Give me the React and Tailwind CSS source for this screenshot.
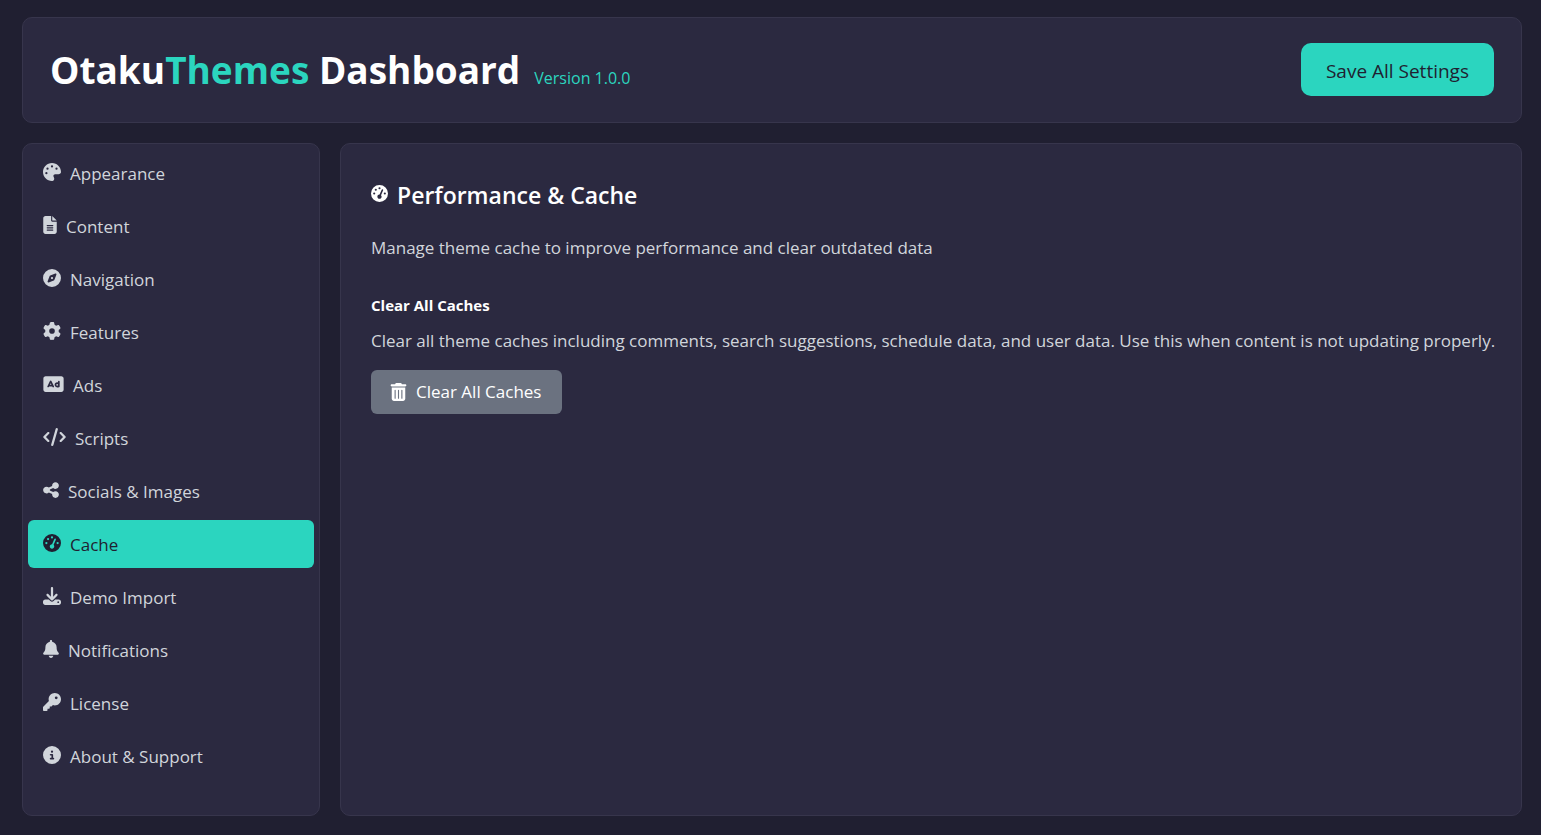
import { useState } from 'react';
import {
  FaBell,
  FaCircleInfo,
  FaCode,
  FaCompass,
  FaDownload,
  FaFileLines,
  FaGaugeHigh,
  FaGear,
  FaKey,
  FaPalette,
  FaRectangleAd,
  FaShareNodes,
  FaTrashCan,
} from 'react-icons/fa6';

const tabs = [
  { id: 'appearance', label: 'Appearance', icon: FaPalette, width: 'w-[18px]' },
  { id: 'content', label: 'Content', icon: FaFileLines, width: 'w-[14px]' },
  { id: 'navigation', label: 'Navigation', icon: FaCompass, width: 'w-[18px]' },
  { id: 'features', label: 'Features', icon: FaGear, width: 'w-[18px]' },
  { id: 'ads', label: 'Ads', icon: FaRectangleAd, width: 'w-[21px]' },
  { id: 'scripts', label: 'Scripts', icon: FaCode, width: 'w-[23px]' },
  { id: 'socials', label: 'Socials & Images', icon: FaShareNodes, width: 'w-[16px]' },
  { id: 'cache', label: 'Cache', icon: FaGaugeHigh, width: 'w-[18px]' },
  { id: 'demo', label: 'Demo Import', icon: FaDownload, width: 'w-[18px]' },
  { id: 'notifications', label: 'Notifications', icon: FaBell, width: 'w-[16px]' },
  { id: 'license', label: 'License', icon: FaKey, width: 'w-[18px]' },
  { id: 'about', label: 'About & Support', icon: FaCircleInfo, width: 'w-[18px]' },
];

export default function App() {
  const [active, setActive] = useState('cache');

  return (
    <div className="flex min-h-screen flex-col gap-5 bg-[#201f31] pt-[17px] pr-[19px] pb-[19px] pl-[22px] font-['Open_Sans','Noto_Sans',sans-serif] text-[17px] leading-6 text-[#d1d5db]">
      <Header />
      <div className="flex flex-1 gap-5">
        <Sidebar active={active} onSelect={setActive} />
        <CachePanel />
      </div>
    </div>
  );
}

function Header() {
  return (
    <header className="flex items-center justify-between rounded-[10px] border border-[#37354c] bg-[#2b2940] pt-[25px] pr-[27px] pb-[26px] pl-[27px]">
      <div className="flex items-baseline gap-[14px]">
        <h1 className="text-[37px] leading-[50px] font-bold text-white">
          Otaku<span className="text-[#2bd5bf]">Themes</span> Dashboard
        </h1>
        <span className="text-[16px] text-[#2bd5bf]">Version 1.0.0</span>
      </div>
      <button type="button" className="h-[53px] rounded-[10px] bg-[#2bd5bf] px-[25px] pt-0.5 text-[19px] text-[#201f31]">
        Save All Settings
      </button>
    </header>
  );
}

function Sidebar({ active, onSelect }) {
  return (
    <nav className="flex w-[298px] flex-shrink-0 flex-col gap-[5px] rounded-[10px] border border-[#37354c] bg-[#2b2940] p-[5px]">
      {tabs.map(({ id, label, icon: Icon, width }) => (
        <button
          key={id}
          type="button"
          onClick={() => onSelect(id)}
          className={`flex h-12 items-center gap-[9px] rounded-md px-[15px] pt-0.5 text-left ${
            id === active ? 'bg-[#2bd5bf] text-[#201f31]' : ''
          }`}
        >
          <Icon className={`mb-1 h-[18px] flex-shrink-0 ${width}`} />
          {label}
        </button>
      ))}
    </nav>
  );
}

function CachePanel() {
  return (
    <main className="min-w-0 flex-1 rounded-[10px] border border-[#37354c] bg-[#2b2940] py-[33px] pr-5 pl-[30px]">
      <h2 className="flex items-center gap-[9px] text-[23px] leading-9 font-semibold text-white">
        <FaGaugeHigh className="mb-1 h-[17px] w-[17px]" />
        Performance &amp; Cache
      </h2>
      <p className="mt-[23px]">Manage theme cache to improve performance and clear outdated data</p>

      <h3 className="mt-[33px] text-[15px] leading-6 font-bold text-white">Clear All Caches</h3>
      <p className="mt-3">
        Clear all theme caches including comments, search suggestions, schedule data, and user data. Use this when
        content is not updating properly.
      </p>
      <button
        type="button"
        className="mt-[17px] flex h-11 items-center gap-[9px] rounded-md bg-[#6b7280] pr-[21px] pl-[19px] text-white"
      >
        <FaTrashCan className="h-[18px] w-[17px]" />
        Clear All Caches
      </button>
    </main>
  );
}
